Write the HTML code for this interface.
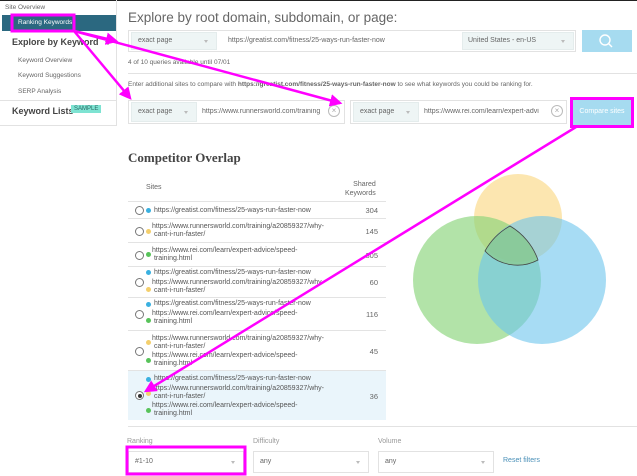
<!DOCTYPE html>
<html><head><style>
*{box-sizing:border-box;margin:0;padding:0}
body{width:637px;height:476px;overflow:hidden;background:#fff;font-family:"Liberation Sans",sans-serif;color:#555;position:relative}
.a{position:absolute}
.t{font-size:7px;color:#666;white-space:nowrap}
.sel{background:#eef5f5;border:1px solid #e4ecec}
.inp{border:1px solid #e2e2e2;background:#fff}
.car{position:absolute;right:8px;top:50%;margin-top:-1px;border-left:2.5px solid transparent;border-right:2.5px solid transparent;border-top:3px solid #bbb}
.row{position:absolute;left:128px;width:258px;border-top:1px solid #e3e3e3}
.rad{position:absolute;left:7px;width:9px;height:9px;border:1px solid #777;border-radius:50%}
.dot{position:absolute;width:5px;height:5px;border-radius:50%}
.num{position:absolute;right:8px;font-size:7.5px;color:#666}
.u{position:absolute;left:24px;font-size:7px;color:#555;line-height:7.5px}
</style></head><body>
<div class="a" style="left:0;top:0;width:637px;height:1px;background:#222"></div>
<!-- sidebar -->
<div class="a" style="left:0;top:0;width:117px;height:126px;border-right:1px solid #e2e2e2;border-bottom:1px solid #e2e2e2"></div>
<div class="a t" style="left:5px;top:4px;font-size:6.5px">Site Overview</div>
<div class="a" style="left:2px;top:15px;width:114px;height:16px;background:#2b6880"></div>
<div class="a t" style="left:18px;top:19px;color:#fff;font-size:6.5px">Ranking Keywords</div>
<div class="a" style="left:12px;top:37px;font-size:9px;font-weight:bold;color:#444">Explore by Keyword</div>
<div class="a" style="left:105px;top:41px;border-left:3px solid transparent;border-right:3px solid transparent;border-top:4px solid #555"></div>
<div class="a t" style="left:18px;top:57px;font-size:6.5px">Keyword Overview</div>
<div class="a t" style="left:18px;top:72px;font-size:6.5px">Keyword Suggestions</div>
<div class="a t" style="left:18px;top:88px;font-size:6.5px">SERP Analysis</div>
<div class="a" style="left:0;top:100px;width:117px;height:1px;background:#e2e2e2"></div>
<div class="a" style="left:12px;top:106px;font-size:9px;font-weight:bold;color:#444">Keyword Lists</div>
<div class="a" style="left:71px;top:105px;background:#7ee3d2;color:#2a6a66;font-size:6px;padding:1px 3px">SAMPLE</div>
<!-- main -->
<div class="a" style="left:128px;top:10px;font-size:13.5px;color:#666">Explore by root domain, subdomain, or page:</div>
<div class="a inp" style="left:128px;top:30px;width:448px;height:22px"></div>
<div class="a sel" style="left:131px;top:32px;width:86px;height:18px"><span class="t" style="position:absolute;left:6px;top:4px">exact page</span><i class="car"></i></div>
<div class="a t" style="left:228px;top:37px">https://greatist.com/fitness/25-ways-run-faster-now</div>
<div class="a sel" style="left:462px;top:32px;width:112px;height:18px"><span class="t" style="position:absolute;left:5px;top:4px">United States - en-US</span><i class="car"></i></div>
<div class="a" style="left:582px;top:30px;width:50px;height:22px;background:#a6dbf0"></div>
<svg class="a" style="left:598px;top:33px" width="16" height="16"><circle cx="7" cy="7" r="5" fill="none" stroke="#fff" stroke-width="1.4"/><line x1="10.5" y1="10.5" x2="14" y2="14" stroke="#fff" stroke-width="1.4"/></svg>
<div class="a t" style="left:128px;top:59px;font-size:6.5px">4 of 10 queries available until 07/01</div>
<div class="a" style="left:128px;top:73px;width:509px;height:1px;background:#e2e2e2"></div>
<div class="a t" style="left:128px;top:81px;font-size:6.5px">Enter additional sites to compare with <b>https://greatist.com/fitness/25-ways-run-faster-now</b> to see what keywords you could be ranking for.</div>
<div class="a inp" style="left:128px;top:100px;width:217px;height:24px"></div>
<div class="a sel" style="left:131px;top:102px;width:66px;height:20px"><span class="t" style="position:absolute;left:6px;top:5px">exact page</span><i class="car"></i></div>
<div class="a t" style="left:202px;top:108px;width:124px;overflow:hidden">https://www.runnersworld.com/training</div>
<div class="a" style="left:328px;top:105px;width:12px;height:12px;border:1px solid #bbb;border-radius:50%;font-size:8px;color:#aaa;text-align:center;line-height:10px">×</div>
<div class="a inp" style="left:350px;top:100px;width:217px;height:24px"></div>
<div class="a sel" style="left:353px;top:102px;width:66px;height:20px"><span class="t" style="position:absolute;left:6px;top:5px">exact page</span><i class="car"></i></div>
<div class="a t" style="left:424px;top:108px;width:124px;overflow:hidden">https://www.rei.com/learn/expert-advi</div>
<div class="a" style="left:551px;top:105px;width:12px;height:12px;border:1px solid #bbb;border-radius:50%;font-size:8px;color:#aaa;text-align:center;line-height:10px">×</div>
<div class="a" style="left:572px;top:99px;width:60px;height:26px;background:#a6dbf0;color:#fff;font-size:7px;text-align:center;line-height:26px">Compare sites</div>
<div class="a" style="left:128px;top:150px;font-family:'Liberation Serif',serif;font-weight:bold;font-size:13px;color:#444">Competitor Overlap</div>
<!-- table -->
<div class="a t" style="left:146px;top:184px">Sites</div>
<div class="a t" style="left:345px;top:180px;text-align:right;line-height:9px">Shared<br>Keywords</div>
<div class="row" style="top:201px;height:17px"><i class="rad" style="top:4px"></i><i class="dot" style="left:18px;top:6px;background:#3ab0e0"></i><span class="u" style="left:26px;top:5px">https://greatist.com/fitness/25-ways-run-faster-now</span><span class="num" style="top:4px">304</span></div>
<div class="row" style="top:218px;height:24px"><i class="rad" style="top:8px"></i><i class="dot" style="left:18px;top:10px;background:#f4cf6c"></i><span class="u" style="top:4px">https://www.runnersworld.com/training/a20859327/why-<br>&nbsp;cant-i-run-faster/</span><span class="num" style="top:8px">145</span></div>
<div class="row" style="top:242px;height:24px"><i class="rad" style="top:8px"></i><i class="dot" style="left:18px;top:9px;background:#58c35a"></i><span class="u" style="top:4px">https://www.rei.com/learn/expert-advice/speed-<br>&nbsp;training.html</span><span class="num" style="top:8px">305</span></div>
<div class="row" style="top:266px;height:31px"><i class="rad" style="top:11px"></i><i class="dot" style="left:18px;top:3px;background:#3ab0e0"></i><i class="dot" style="left:18px;top:20px;background:#f4cf6c"></i><span class="u" style="left:26px;top:2px">https://greatist.com/fitness/25-ways-run-faster-now</span><span class="u" style="top:12px">https://www.runnersworld.com/training/a20859327/why-<br>&nbsp;cant-i-run-faster/</span><span class="num" style="top:11px">60</span></div>
<div class="row" style="top:297px;height:33px"><i class="rad" style="top:12px"></i><i class="dot" style="left:18px;top:4px;background:#3ab0e0"></i><i class="dot" style="left:18px;top:20px;background:#58c35a"></i><span class="u" style="left:26px;top:2px">https://greatist.com/fitness/25-ways-run-faster-now</span><span class="u" style="top:12px">https://www.rei.com/learn/expert-advice/speed-<br>&nbsp;training.html</span><span class="num" style="top:12px">116</span></div>
<div class="row" style="top:330px;height:40px"><i class="rad" style="top:16px"></i><i class="dot" style="left:18px;top:9px;background:#f4cf6c"></i><i class="dot" style="left:18px;top:27px;background:#58c35a"></i><span class="u" style="top:4px">https://www.runnersworld.com/training/a20859327/why-<br>&nbsp;cant-i-run-faster/</span><span class="u" style="top:21px">https://www.rei.com/learn/expert-advice/speed-<br>&nbsp;training.html</span><span class="num" style="top:16px">45</span></div>
<div class="row" style="top:370px;height:50px;background:#eaf5fb"><i class="rad" style="top:20px;background:#fff"><i style="position:absolute;left:1.5px;top:1.5px;width:4px;height:4px;border-radius:50%;background:#333"></i></i><i class="dot" style="left:18px;top:6px;background:#3ab0e0"></i><i class="dot" style="left:18px;top:20px;background:#f4cf6c"></i><i class="dot" style="left:18px;top:37px;background:#58c35a"></i><span class="u" style="left:26px;top:4px">https://greatist.com/fitness/25-ways-run-faster-now</span><span class="u" style="top:14px">https://www.runnersworld.com/training/a20859327/why-<br>&nbsp;cant-i-run-faster/</span><span class="u" style="top:31px">https://www.rei.com/learn/expert-advice/speed-<br>&nbsp;training.html</span><span class="num" style="top:21px">36</span></div>
<div class="a" style="left:128px;top:426px;width:509px;height:1px;background:#e2e2e2"></div>
<!-- venn -->
<svg class="a" style="left:400px;top:170px" width="237" height="180">
<circle cx="118" cy="48" r="44" fill="#fbd985" opacity=".65"/>
<circle cx="77" cy="110" r="64" fill="#88d47a" opacity=".65"/>
<circle cx="142" cy="110" r="64" fill="#6cc4ec" opacity=".6"/>
<path d="M110 56 A64 64 0 0 1 138 90 A44 44 0 0 1 85 81 A64 64 0 0 1 110 56Z" fill="#8cc870" fill-opacity=".5" stroke="#444" stroke-width="0.8"/>
</svg>
<!-- filters -->
<div class="a t" style="left:127px;top:438px;color:#999">Ranking</div>
<div class="a t" style="left:253px;top:438px;color:#999">Difficulty</div>
<div class="a t" style="left:378px;top:438px;color:#999">Volume</div>
<div class="a inp" style="left:128px;top:451px;width:116px;height:22px"><span class="t" style="position:absolute;left:6px;top:6px">#1-10</span><i class="car"></i></div>
<div class="a inp" style="left:253px;top:451px;width:116px;height:22px"><span class="t" style="position:absolute;left:6px;top:6px">any</span><i class="car"></i></div>
<div class="a inp" style="left:378px;top:451px;width:116px;height:22px"><span class="t" style="position:absolute;left:6px;top:6px">any</span><i class="car"></i></div>
<div class="a t" style="left:503px;top:457px;color:#4a90b8">Reset filters</div>
<!-- annotations -->
<svg class="a" style="left:0;top:0" width="637" height="476">
<defs><marker id="m" markerWidth="5" markerHeight="5" refX="4" refY="2.5" orient="auto" markerUnits="strokeWidth"><path d="M0 0L5 2.5L0 5Z" fill="#f0f"/></marker></defs>
<g fill="none" stroke="#f0f" stroke-width="3">
<rect x="12" y="15" width="62" height="16"/>
<rect x="571.5" y="98.5" width="61" height="28"/>
<rect x="127" y="447" width="118" height="27"/>
<line x1="74" y1="31" x2="116" y2="41" marker-end="url(#m)" stroke-width="2.5"/>
<line x1="74" y1="31" x2="340" y2="103" marker-end="url(#m)" stroke-width="2.5"/>
<line x1="74" y1="31" x2="130" y2="98" marker-end="url(#m)" stroke-width="2.5"/>
<line x1="576" y1="127" x2="146" y2="391" marker-end="url(#m)" stroke-width="2.5"/>
</g></svg>
</body></html>
